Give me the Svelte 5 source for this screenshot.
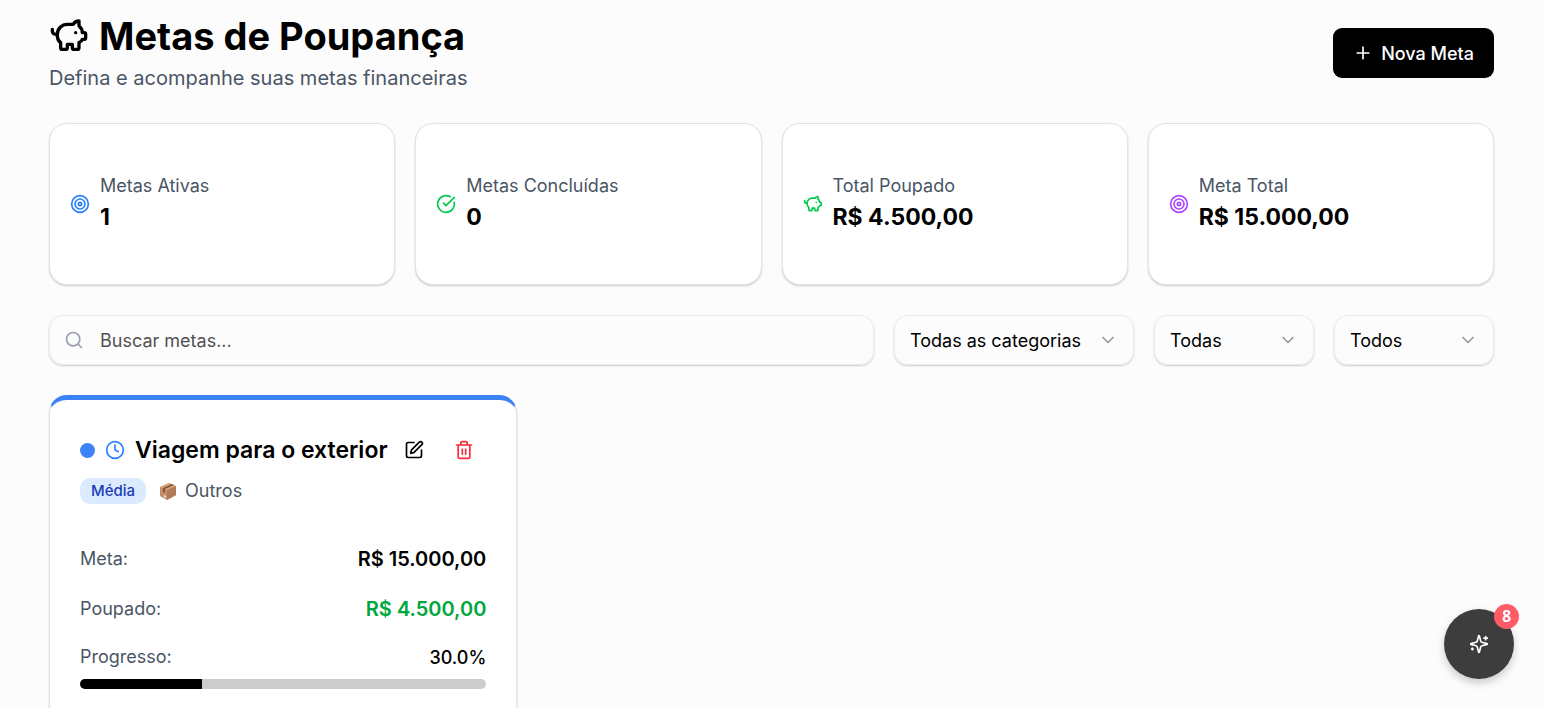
<script lang="ts">
  interface Goal {
    title: string;
    category: string;
    priority: string;
    color: string;
    target: number;
    saved: number;
  }

  let search = $state("");
  let category = $state("all");
  let priority = $state("all");
  let status = $state("all");

  let goals: Goal[] = $state([
    {
      title: "Viagem para o exterior",
      category: "Outros",
      priority: "Média",
      color: "#3b82f6",
      target: 15000,
      saved: 4500,
    },
  ]);

  const visible = $derived(
    goals.filter((g) => g.title.toLowerCase().includes(search.toLowerCase())),
  );
  const active = $derived(goals.filter((g) => g.saved < g.target).length);
  const totalSaved = $derived(goals.reduce((sum, g) => sum + g.saved, 0));
  const totalTarget = $derived(goals.reduce((sum, g) => sum + g.target, 0));

  function money(value: number) {
    const [int, dec] = value.toFixed(2).split(".");
    return "R$ " + int.replace(/\B(?=(\d{3})+$)/g, ".") + "," + dec;
  }

  function percent(g: Goal) {
    return ((g.saved / g.target) * 100).toFixed(1);
  }

  function remove(g: Goal) {
    goals = goals.filter((other) => other !== g);
  }
</script>

{#snippet piggy()}
  <path d="M11 17h3v2a1 1 0 0 0 1 1h2a1 1 0 0 0 1-1v-3a3.16 3.16 0 0 0 2-2h1a1 1 0 0 0 1-1v-2a1 1 0 0 0-1-1h-1a5 5 0 0 0-2-4V3a4 4 0 0 0-3.2 1.6l-.3.4H11a6 6 0 0 0-6 6v1a5 5 0 0 0 2 4v3a1 1 0 0 0 1 1h2a1 1 0 0 0 1-1z" />
  <path d="M16 10h.01" />
  <path d="M2 8v1a2 2 0 0 0 2 2h1" />
{/snippet}

{#snippet target()}
  <circle cx="12" cy="12" r="10" />
  <circle cx="12" cy="12" r="6" />
  <circle cx="12" cy="12" r="2" />
{/snippet}

{#snippet check()}
  <path d="M21.801 10A10 10 0 1 1 17 3.335" />
  <path d="m9 11 3 3L22 4" />
{/snippet}

{#snippet stat(label, value, icon, tone)}
  <div class="card stat">
    <svg class="icon {tone}" viewBox="0 0 24 24">{@render icon()}</svg>
    <div>
      <p class="label">{label}</p>
      <p class="stat-value">{value}</p>
    </div>
  </div>
{/snippet}

{#snippet chevron()}
  <svg class="icon chevron" viewBox="0 0 24 24"><path d="m6 9 6 6 6-6" /></svg>
{/snippet}

<main class="page">
  <header class="header">
    <div>
      <h1>
        <svg class="icon title-icon" viewBox="0 0 24 24">{@render piggy()}</svg>
        Metas de Poupança
      </h1>
      <p class="subtitle">Defina e acompanhe suas metas financeiras</p>
    </div>
    <button class="new-goal">
      <svg class="icon" viewBox="0 0 24 24"><path d="M5 12h14M12 5v14" /></svg>
      Nova Meta
    </button>
  </header>

  <section class="stats">
    {@render stat("Metas Ativas", active, target, "blue")}
    {@render stat("Metas Concluídas", goals.length - active, check, "green")}
    {@render stat("Total Poupado", money(totalSaved), piggy, "green")}
    {@render stat("Meta Total", money(totalTarget), target, "purple")}
  </section>

  <section class="filters">
    <div class="search">
      <svg class="icon search-icon" viewBox="0 0 24 24">
        <circle cx="11" cy="11" r="8" />
        <path d="m21 21-4.34-4.34" />
      </svg>
      <input
        type="text"
        aria-label="Buscar metas"
        placeholder="Buscar metas..."
        bind:value={search}
      />
    </div>
    <div class="select wide">
      <select aria-label="Categoria" bind:value={category}>
        <option value="all">Todas as categorias</option>
        <option value="other">Outros</option>
      </select>
      {@render chevron()}
    </div>
    <div class="select">
      <select aria-label="Prioridade" bind:value={priority}>
        <option value="all">Todas</option>
        <option value="medium">Média</option>
      </select>
      {@render chevron()}
    </div>
    <div class="select">
      <select aria-label="Status" bind:value={status}>
        <option value="all">Todos</option>
        <option value="active">Ativas</option>
      </select>
      {@render chevron()}
    </div>
  </section>

  <section class="goals">
    {#each visible as goal}
      <article class="card goal" style:border-top-color={goal.color}>
        <div class="goal-head">
          <span class="dot" style:background={goal.color}></span>
          <svg class="icon blue" viewBox="0 0 24 24">
            <circle cx="12" cy="12" r="10" />
            <path d="M12 6v6l4 2" />
          </svg>
          <h2>{goal.title}</h2>
          <div class="actions">
            <button aria-label="Editar">
              <svg class="icon" viewBox="0 0 24 24">
                <path d="M12 3H5a2 2 0 0 0-2 2v14a2 2 0 0 0 2 2h14a2 2 0 0 0 2-2v-7" />
                <path d="M18.375 2.625a1 1 0 0 1 3 3l-9.013 9.014a2 2 0 0 1-.853.505l-2.873.84a.5.5 0 0 1-.62-.62l.84-2.873a2 2 0 0 1 .506-.852z" />
              </svg>
            </button>
            <button class="red" aria-label="Excluir" onclick={() => remove(goal)}>
              <svg class="icon" viewBox="0 0 24 24">
                <path d="M3 6h18M19 6v14a2 2 0 0 1-2 2H7a2 2 0 0 1-2-2V6" />
                <path d="M8 6V4a2 2 0 0 1 2-2h4a2 2 0 0 1 2 2v2M10 11v6M14 11v6" />
              </svg>
            </button>
          </div>
        </div>

        <div class="tags">
          <span class="badge">{goal.priority}</span>
          <svg class="package" viewBox="0 0 18 18">
            <path fill="#c68e68" d="M1 5 10 1l7 3v9l-9 5-7-4z" />
            <path fill="#b07a56" d="m8 8 9-4v9l-9 5z" />
            <path fill="#d9a67f" d="m1 5 9-4 7 3-9 4z" />
            <path fill="#845338" d="m4 6 9-4 2 1-9 4v4l-2-1z" />
            <path fill="#efe0d6" d="m5 13 2 1v2l-2-1z" />
          </svg>
          <span class="label">{goal.category}</span>
        </div>

        <div class="row">
          <span class="label">Meta:</span>
          <strong>{money(goal.target)}</strong>
        </div>
        <div class="row">
          <span class="label">Poupado:</span>
          <strong class="saved">{money(goal.saved)}</strong>
        </div>
        <div class="row progress-row">
          <span class="label">Progresso:</span>
          <span class="percent">{percent(goal)}%</span>
        </div>
        <div class="track">
          <div class="fill" style:width="{percent(goal)}%"></div>
        </div>
      </article>
    {/each}
  </section>
</main>

<button class="assistant" aria-label="Assistente">
  <svg class="icon" viewBox="0 0 24 24">
    <path d="M9.937 15.5A2 2 0 0 0 8.5 14.063l-6.135-1.582a.5.5 0 0 1 0-.962L8.5 9.936A2 2 0 0 0 9.937 8.5l1.582-6.135a.5.5 0 0 1 .963 0L14.063 8.5A2 2 0 0 0 15.5 9.937l6.135 1.581a.5.5 0 0 1 0 .964L15.5 14.063a2 2 0 0 0-1.437 1.437l-1.582 6.135a.5.5 0 0 1-.963 0z" />
    <path d="M20 3v4M22 5h-4M4 17v2M5 18H3" />
  </svg>
  <span class="count">8</span>
</button>

<style>
  :global(body) {
    background: #fcfcfc;
    color: #000;
    font-family: Inter, sans-serif;
    font-size: 18px;
  }
  * {
    box-sizing: border-box;
  }
  h1,
  h2,
  p {
    margin: 0;
  }
  button,
  input,
  select {
    font: inherit;
    color: inherit;
  }
  button {
    border: none;
    background: none;
    padding: 0;
    cursor: pointer;
  }
  .icon {
    width: 20px;
    height: 20px;
    flex-shrink: 0;
    fill: none;
    stroke: currentColor;
    stroke-width: 2;
    stroke-linecap: round;
    stroke-linejoin: round;
  }
  .blue {
    color: #2b7fff;
  }
  .green {
    color: #00c950;
  }
  .purple {
    color: #ad46ff;
  }
  .red {
    color: #fb2c36;
  }
  .page {
    display: flex;
    flex-direction: column;
    gap: 30px;
    height: 100vh;
    padding: 13px 51px 30px 49px;
    overflow-y: auto;
    scrollbar-width: none;
  }
  .header {
    display: flex;
    align-items: center;
    justify-content: space-between;
  }
  h1 {
    display: flex;
    align-items: center;
    gap: 10px;
    font-size: 38px;
    font-weight: 700;
    line-height: 46px;
  }
  .title-icon {
    width: 40px;
    height: 40px;
  }
  .subtitle {
    margin-top: 4px;
    font-size: 20px;
    line-height: 30px;
    color: #4a5565;
  }
  .new-goal {
    display: flex;
    align-items: center;
    gap: 8px;
    height: 50px;
    padding: 0 20px;
    border-radius: 9px;
    background: #000;
    color: #fff;
    font-weight: 500;
  }
  .card {
    flex-shrink: 0;
    border: 1px solid #e4e4e4;
    border-radius: 18px;
    background: #fff;
    box-shadow: 0 1px 2px rgba(0, 0, 0, 0.2);
  }
  .stats {
    display: grid;
    grid-template-columns: repeat(4, 1fr);
    gap: 20px;
  }
  .stat {
    display: flex;
    align-items: center;
    gap: 10px;
    height: 162px;
    padding: 0 20px;
  }
  .label {
    line-height: 26px;
    color: #4a5565;
  }
  .stat-value {
    font-size: 23px;
    font-weight: 700;
    line-height: 36px;
  }
  .filters {
    display: flex;
    gap: 20px;
  }
  .search,
  .select {
    position: relative;
    height: 50px;
    border: 1px solid #ebebeb;
    border-radius: 14px;
    box-shadow: 0 1px 2px rgba(0, 0, 0, 0.2);
  }
  .search {
    flex: 1;
    display: flex;
    align-items: center;
    gap: 16px;
    padding: 0 14px;
  }
  .search-icon {
    color: #99a1af;
  }
  .search input {
    flex: 1;
    height: 100%;
    padding: 0;
    border: none;
    background: none;
    outline: none;
  }
  .search input::placeholder {
    color: #525252;
    opacity: 1;
  }
  .select {
    width: 160px;
  }
  .wide {
    width: 240px;
  }
  select {
    appearance: none;
    width: 100%;
    height: 100%;
    padding: 0 40px 0 15px;
    border: none;
    border-radius: 14px;
    background: none;
  }
  .chevron {
    position: absolute;
    top: 14px;
    right: 15px;
    color: #999;
    pointer-events: none;
  }
  .goals {
    display: grid;
    grid-template-columns: repeat(3, minmax(0, 1fr));
    gap: 20px;
  }
  .goal {
    padding: 30px 30px 60px;
    border-top: 5px solid;
  }
  .goal-head {
    display: flex;
    align-items: center;
    gap: 10px;
    height: 40px;
  }
  .dot {
    flex-shrink: 0;
    width: 15px;
    height: 15px;
    border-radius: 50%;
  }
  h2 {
    flex: 1;
    min-width: 0;
    font-size: 23px;
    font-weight: 600;
    line-height: 36px;
    white-space: nowrap;
  }
  .actions {
    display: flex;
    gap: 6px;
  }
  .actions button {
    display: grid;
    place-items: center;
    width: 44px;
    height: 40px;
  }
  .tags {
    display: flex;
    align-items: center;
    gap: 8px;
    margin: 8px 0 40px;
  }
  .badge {
    padding: 0 11px;
    margin-right: 5px;
    border-radius: 10px;
    background: #dbeafe;
    color: #193cb8;
    font-size: 15px;
    font-weight: 500;
    line-height: 26px;
  }
  .package {
    width: 18px;
    height: 18px;
  }
  .row {
    display: flex;
    align-items: center;
    justify-content: space-between;
    margin-bottom: 20px;
  }
  .row strong {
    font-size: 20px;
    font-weight: 600;
    line-height: 30px;
  }
  .row .saved {
    color: #00a63e;
  }
  .progress-row {
    margin-bottom: 9px;
  }
  .percent {
    font-weight: 500;
  }
  .track {
    height: 10px;
    border-radius: 5px;
    background: #ccc;
    overflow: hidden;
  }
  .fill {
    height: 100%;
    background: #000;
  }
  .assistant {
    position: fixed;
    right: 31px;
    bottom: 29px;
    display: grid;
    place-items: center;
    width: 70px;
    height: 70px;
    border-radius: 50%;
    background: #3d3d3d;
    color: #fff;
    box-shadow: 0 4px 8px rgba(0, 0, 0, 0.2);
  }
  .count {
    position: absolute;
    top: -5px;
    right: -5px;
    width: 25px;
    height: 25px;
    border-radius: 50%;
    background: #ff5c67;
    font-family: "Open Sans", sans-serif;
    font-size: 16px;
    font-weight: 700;
    line-height: 25px;
  }
</style>
